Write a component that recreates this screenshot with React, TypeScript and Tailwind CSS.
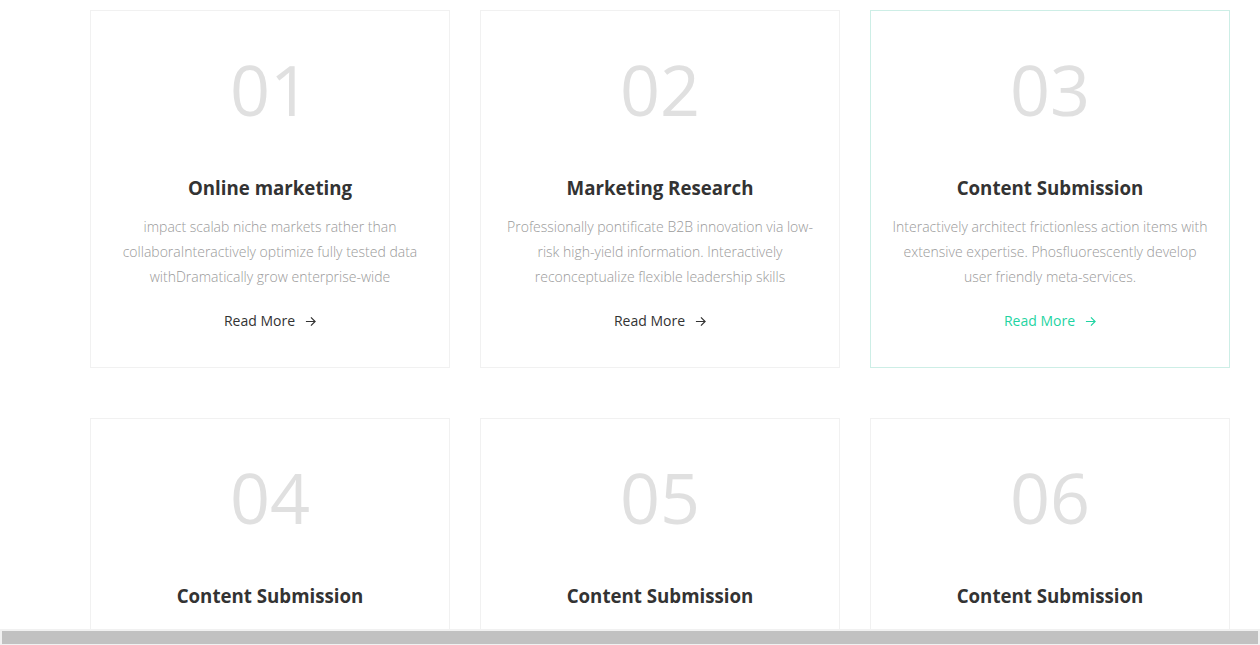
const cards = [
  {
    num: "01",
    title: "Online marketing",
    text: "impact scalab niche markets rather than collaboraInteractively optimize fully tested data withDramatically grow enterprise-wide",
  },
  {
    num: "02",
    title: "Marketing Research",
    text: "Professionally pontificate B2B innovation via low-risk high-yield information. Interactively reconceptualize flexible leadership skills",
  },
  {
    num: "03",
    title: "Content Submission",
    text: "Interactively architect frictionless action items with extensive expertise. Phosfluorescently develop user friendly meta-services.",
    active: true,
  },
  {
    num: "04",
    title: "Content Submission",
    text: "Interactively architect frictionless action items with extensive expertise. Phosfluorescently develop user friendly meta-services.",
  },
  {
    num: "05",
    title: "Content Submission",
    text: "Interactively architect frictionless action items with extensive expertise. Phosfluorescently develop user friendly meta-services.",
  },
  {
    num: "06",
    title: "Content Submission",
    text: "Interactively architect frictionless action items with extensive expertise. Phosfluorescently develop user friendly meta-services.",
  },
];

function Arrow() {
  return (
    <svg width="11" height="11" viewBox="0 0 12 12" fill="none" stroke="currentColor" strokeWidth="1.3">
      <path d="M1 6h10M6.5 1.5L11 6l-4.5 4.5" />
    </svg>
  );
}

export default function App() {
  return (
    <div className="flex h-screen flex-col bg-white font-['Open_Sans',sans-serif]">
      <div className="flex-1 overflow-hidden">
        <div className="grid grid-cols-[360px_360px_360px] gap-x-[30px] gap-y-[50px] pl-[90px] pt-[10px] pb-[40px]">
          {cards.map((c) => (
            <div
              key={c.num}
              className={`flex flex-col items-center border px-5 pt-[43px] pb-[34px] text-center ${
                c.active ? "border-[#cdeee6]" : "border-[#f1f1f1]"
              }`}
            >
              <div className="text-[70px] font-normal leading-[70px] text-[#e0e0e0]">{c.num}</div>
              <h3 className="mt-[52px] text-[18.7px] font-bold leading-[24px] text-[#333333]">{c.title}</h3>
              <p className="mt-[14px] text-[14px] font-light leading-[25px] text-[#9a9a9a]">{c.text}</p>
              <a
                href="#"
                className={`mt-[20px] flex items-center gap-[10px] text-[14px] leading-[24px] ${
                  c.active ? "text-[#1fd4a2]" : "text-[#333333]"
                }`}
              >
                Read More
                <Arrow />
              </a>
            </div>
          ))}
        </div>
      </div>
      <div className="h-[16px] shrink-0 bg-[#f1f1f1] px-[2px] pt-[2px]">
        <div className="h-[13px] bg-[#c1c1c1]" />
      </div>
    </div>
  );
}
